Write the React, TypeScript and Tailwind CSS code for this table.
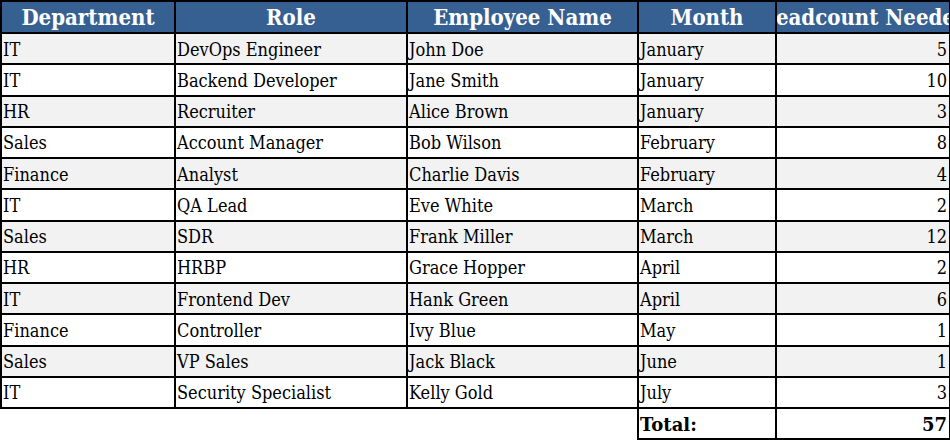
const rows = [
  ["IT", "DevOps Engineer", "John Doe", "January", 5],
  ["IT", "Backend Developer", "Jane Smith", "January", 10],
  ["HR", "Recruiter", "Alice Brown", "January", 3],
  ["Sales", "Account Manager", "Bob Wilson", "February", 8],
  ["Finance", "Analyst", "Charlie Davis", "February", 4],
  ["IT", "QA Lead", "Eve White", "March", 2],
  ["Sales", "SDR", "Frank Miller", "March", 12],
  ["HR", "HRBP", "Grace Hopper", "April", 2],
  ["IT", "Frontend Dev", "Hank Green", "April", 6],
  ["Finance", "Controller", "Ivy Blue", "May", 1],
  ["Sales", "VP Sales", "Jack Black", "June", 1],
  ["IT", "Security Specialist", "Kelly Gold", "July", 3],
] as const;

const headers = ["Department", "Role", "Employee Name", "Month", "Headcount Needed"];

export default function App() {
  const total = rows.reduce((sum, r) => sum + r[4], 0);

  return (
    <div
      className="w-[950px] h-[440px] overflow-hidden bg-white font-stretch-condensed"
      style={{ fontFamily: '"DejaVu Serif Condensed", "DejaVu Serif", serif' }}
    >
      <table className="table-fixed border-collapse w-[949px] text-[18px] text-black">
        <colgroup>
          <col className="w-[174px]" />
          <col className="w-[232px]" />
          <col className="w-[231px]" />
          <col className="w-[138px]" />
          <col className="w-[174px]" />
        </colgroup>
        <thead>
          <tr className="h-[32px] bg-[#366092]">
            {headers.map((h) => (
              <th key={h} className="border-2 border-black p-0 text-white font-bold text-[22px]">
                <div className="flex justify-center overflow-hidden whitespace-nowrap leading-[28px]">
                  {h}
                </div>
              </th>
            ))}
          </tr>
        </thead>
        <tbody>
          {rows.map((r, i) => (
            <tr key={i} className={`h-[31.25px] ${i % 2 === 0 ? "bg-[#f2f2f2]" : "bg-white"}`}>
              <td className="border-2 border-black px-px pt-[2px] pb-0 leading-[26px] whitespace-nowrap">{r[0]}</td>
              <td className="border-2 border-black px-px pt-[2px] pb-0 leading-[26px] whitespace-nowrap">{r[1]}</td>
              <td className="border-2 border-black px-px pt-[2px] pb-0 leading-[26px] whitespace-nowrap">{r[2]}</td>
              <td className="border-2 border-black px-px pt-[2px] pb-0 leading-[26px] whitespace-nowrap">{r[3]}</td>
              <td className="border-2 border-black px-[2px] pt-[2px] pb-0 leading-[26px] text-right">{r[4]}</td>
            </tr>
          ))}
          <tr className="h-[31.25px]">
            <td className="p-0" />
            <td className="p-0" />
            <td className="p-0" />
            <td className="border-2 border-black px-px pt-[2px] pb-0 leading-[26px] font-bold font-['DejaVu_Serif',serif] font-stretch-normal">
              Total:
            </td>
            <td className="border-2 border-black px-[2px] pt-[2px] pb-0 leading-[26px] font-bold font-['DejaVu_Serif',serif] font-stretch-normal text-right">
              {total}
            </td>
          </tr>
        </tbody>
      </table>
    </div>
  );
}
